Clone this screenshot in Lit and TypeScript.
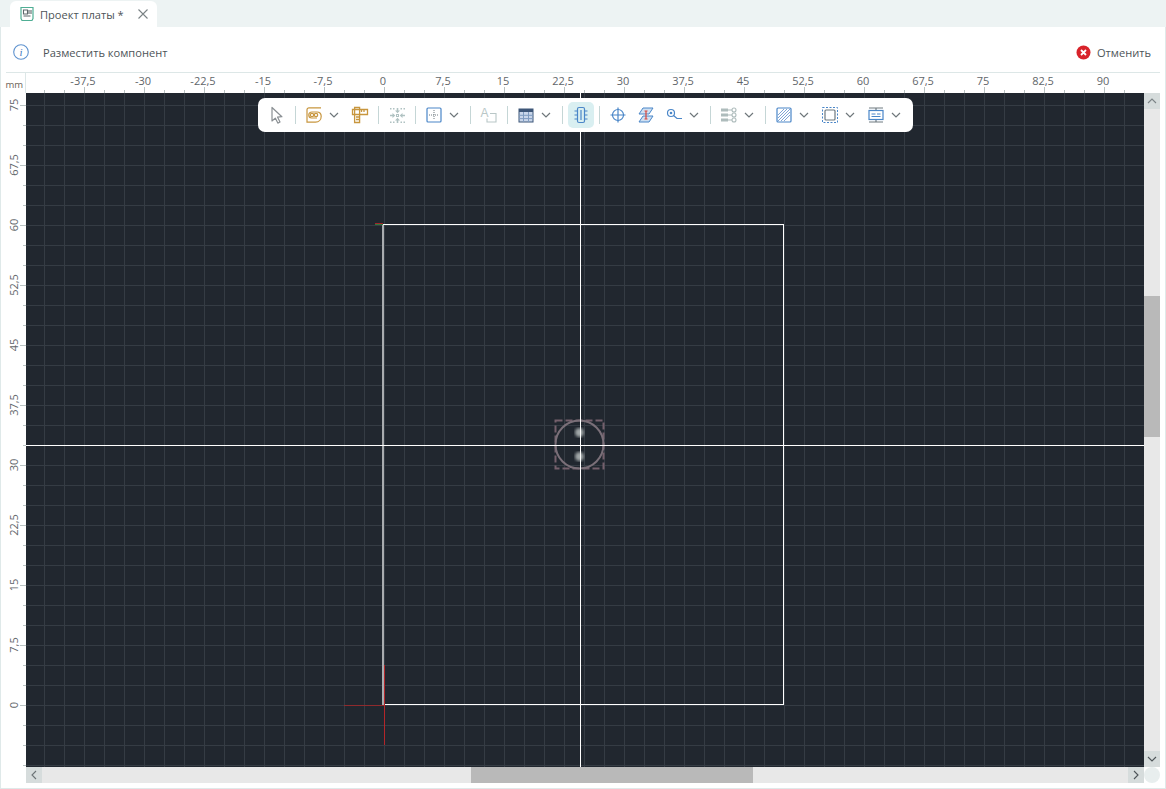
import { LitElement, html, css, svg } from 'lit';
import { customElement } from 'lit/decorators.js';

const X0 = 384;
const Y0 = 705;
const mm = (v: number) => String(v).replace('.', ',');

// grid of the board canvas, one line every 2.5 mm (20px)
const vLines: number[] = [];
for (let x = X0 - 340; x < 1144; x += 20) vLines.push(x);
const hLines: number[] = [];
for (let y = Y0 + 60; y > 93; y -= 20) hLines.push(y);

const xLabels: number[] = [];
for (let v = -37.5; v <= 90; v += 7.5) xLabels.push(v);
const yLabels: number[] = [];
for (let v = 0; v <= 75; v += 7.5) yLabels.push(v);

const ICONS = {
  arrow: svg`<path d="M5 2.5v13.5l3.3-2.9 2.5 5 2.2-1.1-2.5-4.9 4.4-.4z" fill="none" stroke="#8a8f93" stroke-width="1.2" stroke-linejoin="round"/>`,
  route: svg`<g fill="none" stroke="#c8963e" stroke-width="1.200"><path d="M17 2.800H5A2 2 0 0 0 3 4.800V13"/><path d="M3 13v4.200h8.500c3.500 0 5.700-2.700 5.700-6 0-2.700-1.900-4.200-4.200-4.200H8C5.800 7 4.800 8.500 4.800 10S5.800 13 7.500 13H13"/><circle cx="8" cy="10" r="1.700"/><circle cx="12" cy="10" r="1.700"/></g>`,
  ruler: svg`<g fill="none" stroke="#c8963e" stroke-width="1.300"><path d="M4.600 2.500h5v15h-5z"/><path d="M2.500 4.500h15v5h-15z"/><path d="M11.500 4.500v2.500M14 4.500v2.500M6 12h3.500M6 14.500h3.500"/></g>`,
  spread: svg`<g fill="#b0c2c2"><path d="M10.500 8.300L8 5.500h1.700V3h1.600v2.500H13zM10.500 12.700L8 15.500h1.700V18h1.600v-2.500H13zM8.300 10.500L5.500 8v1.700H3v1.600h2.500V13zM12.700 10.500l2.800-2.500v1.700H18v1.600h-2.500V13z"/><path d="M3 3h1.500v1.500H3zM6 3h1.500v1.500H6zM13.500 3H15v1.500h-1.500zM16.500 3H18v1.500h-1.500zM3 16.500h1.500V18H3zM6 16.500h1.500V18H6zM13.500 16.500H15V18h-1.500zM16.500 16.500H18V18h-1.500z"/></g><rect x="9.500" y="9.500" width="2" height="2" fill="none" stroke="#b0c2c2"/>`,
  snap: svg`<rect x="3" y="3" width="14" height="14" rx="1" fill="none" stroke="#4a86c8" stroke-width="1.200"/><path d="M10 5v10M5 10h10" stroke="#6f7a80" stroke-width="1" stroke-dasharray="1 1"/>`,
  text: svg`<text x="1.500" y="11.500" font-family="Liberation Sans, sans-serif" font-size="12" fill="#b9c7c7">A</text><path d="M11 8.500h6v8.500H8v-3.500" fill="none" stroke="#b9c7c7" stroke-width="1.100"/>`,
  table: svg`<rect x="3" y="4" width="14" height="13" fill="#c9d6ea" stroke="#3d5678" stroke-width="1"/><rect x="3" y="4" width="14" height="3" fill="#3d5678"/><path d="M7.500 7v10M12.500 7v10M3 10.300h14M3 13.600h14" stroke="#7f9bc0" stroke-width="1"/>`,
  chip: svg`<g fill="none" stroke="#4a86c8" stroke-width="1.200"><rect x="6.500" y="2.500" width="7" height="15" rx="1.500"/><path d="M3.500 6h3M3.500 10h3M3.500 14h3M13.500 6h3M13.500 10h3M13.500 14h3M10 5v10"/></g>`,
  target: svg`<g fill="none" stroke="#4a86c8" stroke-width="1.200"><circle cx="10" cy="10" r="5.500"/><path d="M10 2.500v15M2.500 10h15"/></g>`,
  via: svg`<g fill="#cfe0f2" stroke="#4a86c8" stroke-width="1"><path d="M7 3h10l-4 6H3z"/><path d="M7 11h10l-4 6H3z"/></g><path d="M10 6v8M8.500 6h3M8.500 14h3" stroke="#d9463c" stroke-width="1.200" fill="none"/>`,
  probe: svg`<g fill="none" stroke="#4a86c8" stroke-width="1.200"><circle cx="7" cy="8" r="3.500"/><path d="M9.500 10.500l3.500 3h5"/></g><circle cx="7" cy="8" r="1.300" fill="#4a86c8"/>`,
  tree: svg`<g fill="#aebcbc"><rect x="2" y="3.500" width="7" height="3"/><rect x="2" y="8.500" width="7" height="3"/><rect x="2" y="13.500" width="7" height="3"/></g><g fill="none" stroke="#aebcbc" stroke-width="1.100"><circle cx="15" cy="5" r="2"/><circle cx="15" cy="10" r="2"/><circle cx="15" cy="15" r="2"/><path d="M9 5h4M9 10h4M9 15h4"/></g>`,
  hatch: svg`<rect x="3" y="3" width="14" height="14" rx="1" fill="#fff" stroke="#4a86c8" stroke-width="1.200"/><path d="M4 10l6-6M4 13l9-9M4 16l12-12M7 16l9-9M10 16l6-6" stroke="#7fa6d6" stroke-width="1"/>`,
  outline: svg`<rect x="2.500" y="2.500" width="15" height="15" fill="none" stroke="#4a86c8" stroke-width="1" stroke-dasharray="2 1.500"/><rect x="5" y="5" width="10" height="10" rx="1" fill="none" stroke="#6f7a80" stroke-width="1.200"/>`,
  frame: svg`<path d="M3 3h14M3 17h14M10 3v2M10 15v2" stroke="#6f7a80" stroke-width="1.200" fill="none"/><rect x="3" y="5.500" width="14" height="9" fill="none" stroke="#4a86c8" stroke-width="1.200"/><path d="M5.500 9h4M5.500 11.500h9M11 9h3.500" stroke="#4a86c8" stroke-width="1"/>`,
};

type IconName = keyof typeof ICONS;

@customElement('app-root')
export class AppRoot extends LitElement {
  static styles = css`
    :host {
      display: flex;
      flex-direction: column;
      height: 789px;
      background: #edf3f3;
      font-family: 'Open Sans', 'Liberation Sans', sans-serif;
      font-size: 11.1px;
      color: #4d5458;
    }

    .tabs {
      height: 27px;
      padding-left: 10px;
      flex: none;
      box-sizing: border-box;
      padding-top: 1px;
    }

    .tab {
      width: 147px;
      height: 26px;
      background: #fff;
      border-radius: 6px 6px 0 0;
      display: flex;
      align-items: center;
      box-sizing: border-box;
      padding-left: 9px;
    }

    .tab-title {
      margin-left: 5px;
      flex: 1;
      white-space: nowrap;
    }

    .tab-close {
      width: 12px;
      height: 12px;
      margin-right: 8px;
    }

    .panel {
      flex: 1;
      display: flex;
      flex-direction: column;
      background: #fff;
      border: 1px solid #dfe9e9;
      border-top: none;
      min-height: 0;
    }

    .actions {
      height: 46px;
      flex: none;
      box-sizing: border-box;
      margin: 0 5px;
      border-bottom: 1px solid #dde7e7;
      display: flex;
      align-items: center;
      padding: 5px 9px 0 7px;
    }

    .hint {
      margin-left: 14px;
      flex: 1;
    }

    .cancel {
      display: flex;
      align-items: center;
      gap: 6px;
    }

    .workspace {
      flex: 1;
      display: grid;
      grid-template-columns: 25px 1118px 16px;
      grid-template-rows: 20px 674px 16px;
      padding: 0 5px 5px 0;
    }

    .corner {
      font-size: 9.5px;
      color: #6b6257;
      display: flex;
      align-items: flex-end;
      justify-content: flex-end;
      padding: 0 2px 2px 0;
      border-right: 1px solid #dde7e7;
      box-sizing: border-box;
    }

    .ruler {
      display: block;
    }

    .ruler text {
      font-family: 'Open Sans', 'Liberation Sans', sans-serif;
      font-size: 11px;
      fill: #5f666a;
    }

    .canvas {
      position: relative;
      background: #21272f;
      overflow: hidden;
    }

    .canvas > svg {
      display: block;
    }

    .toolbar {
      position: absolute;
      left: 232px;
      top: 5px;
      height: 34px;
      width: 655px;
      box-sizing: border-box;
      background: #fff;
      border-radius: 7px;
      display: flex;
      align-items: center;
      padding-left: 6px;
    }

    .tool {
      width: 26px;
      height: 26px;
      flex: none;
      display: flex;
      align-items: center;
      justify-content: center;
      border-radius: 5px;
    }

    .tool.active {
      background: #d9eff1;
    }

    .tool + .tool {
      margin-left: 2px;
    }

    .chev {
      width: 14px;
      flex: none;
      display: flex;
      justify-content: center;
    }

    .chev + .tool {
      margin-left: 6px;
    }

    .sep {
      width: 1px;
      height: 18px;
      flex: none;
      margin: 0 5px;
      background: #c5d6d6;
    }

    .chev + .sep {
      margin-left: 9px;
    }

    .vscroll,
    .hscroll {
      background: #e8e8e8;
      display: flex;
    }

    .vscroll {
      flex-direction: column;
    }

    .sbtn {
      flex: none;
      background: #d6dcdc;
      display: flex;
      align-items: center;
      justify-content: center;
    }

    .vscroll .sbtn {
      height: 16px;
    }

    .hscroll .sbtn {
      width: 16px;
    }

    .vtrack,
    .htrack {
      flex: 1;
    }

    .vthumb {
      margin-top: 187px;
      height: 141px;
      background: #b9b9b9;
    }

    .hthumb {
      margin-left: 429px;
      width: 282px;
      height: 16px;
      background: #b9b9b9;
    }

    .scroll-corner {
      background: #e8eeee;
      border-radius: 50%;
    }
  `;

  private icon(name: IconName) {
    return html`<svg width="20" height="20" viewBox="0 0 20 20">${ICONS[name]}</svg>`;
  }

  private tool(name: IconName, active = false) {
    return html`<div class="tool ${active ? 'active' : ''}">${this.icon(name)}</div>`;
  }

  private chev() {
    return html`<div class="chev">
      <svg width="10" height="6" viewBox="0 0 10 6"><path d="M1 1l4 4 4-4" fill="none" stroke="#6f777b" stroke-width="1.200" /></svg>
    </div>`;
  }

  private toolbar() {
    const sep = html`<div class="sep"></div>`;
    return html`<div class="toolbar">
      ${this.tool('arrow')} ${sep} ${this.tool('route')} ${this.chev()} ${this.tool('ruler')} ${sep}
      ${this.tool('spread')} ${sep} ${this.tool('snap')} ${this.chev()} ${sep} ${this.tool('text')} ${sep}
      ${this.tool('table')} ${this.chev()} ${sep} ${this.tool('chip', true)} ${sep} ${this.tool('target')}
      ${this.tool('via')} ${this.tool('probe')} ${this.chev()} ${sep} ${this.tool('tree')} ${this.chev()} ${sep}
      ${this.tool('hatch')} ${this.chev()} ${this.tool('outline')} ${this.chev()} ${this.tool('frame')} ${this.chev()}
    </div>`;
  }

  private topRuler() {
    return html`<svg class="ruler" width="1118" height="20" viewBox="26 73 1118 20">
      ${vLines.map((x) => svg`<rect x=${x} y="90" width="1" height="3" fill="#b9c2c2" />`)}
      ${xLabels.map((v) => {
        const x = X0 - 1 + v * 8;
        return svg`<rect x=${x + 1} y="87" width="1" height="6" fill="#b9c2c2" /><text x=${x} y="85" text-anchor="middle">${mm(v)}</text>`;
      })}
    </svg>`;
  }

  private leftRuler() {
    return html`<svg class="ruler" width="25" height="674" viewBox="1 93 25 674">
      ${hLines.map((y) => svg`<rect x="23" y=${y} width="3" height="1" fill="#b9c2c2" />`)}
      ${yLabels.map((v) => {
        const y = Y0 - v * 8;
        return svg`<rect x="20" y=${y} width="6" height="1" fill="#b9c2c2" /><text transform="translate(18 ${y}) rotate(-90)" text-anchor="middle">${mm(v)}</text>`;
      })}
    </svg>`;
  }

  private board() {
    return html`<svg width="1118" height="674" viewBox="26 93 1118 674">
      ${vLines.map((x) => svg`<rect x=${x} y="93" width="1" height="674" fill="#353c44" />`)}
      ${hLines.map((y) => svg`<rect x="26" y=${y} width="1118" height="1" fill="#353c44" />`)}

      <!-- board outline -->
      <rect x="382" y="224" width="2" height="481" fill="#a9acaf" />
      <rect x="383" y="224" width="401" height="1" fill="#fff" />
      <rect x="783" y="224" width="1" height="481" fill="#fff" />
      <rect x="384" y="704" width="400" height="1" fill="#fff" />

      <!-- origin markers -->
      <rect x="375" y="223" width="8" height="1" fill="#a3262a" />
      <rect x="375" y="224" width="8" height="1" fill="#2f7a3a" />
      <rect x="384" y="665" width="1" height="80" fill="#b3262a" />
      <rect x="344" y="705" width="40" height="1" fill="#8f2a2d" />

      <!-- component under the cursor -->
      <defs>
        <filter id="soft"><feGaussianBlur stdDeviation="1.500" /></filter>
      </defs>
      <rect x="555.500" y="420.500" width="48" height="48" fill="none" stroke="#75606c" stroke-width="2" stroke-dasharray="7 3" />
      <circle cx="579.500" cy="444.500" r="24" fill="none" stroke="#7a6f78" stroke-width="2" />
      <circle cx="579.500" cy="432.500" r="4.500" fill="#a2a8a9" filter="url(#soft)" />
      <circle cx="579.500" cy="456.500" r="4.500" fill="#a2a8a9" filter="url(#soft)" />

      <!-- crosshair -->
      <rect x="580" y="93" width="1" height="674" fill="#fff" />
      <rect x="26" y="445" width="1118" height="1" fill="#fff" />
    </svg>`;
  }

  render() {
    return html`
      <div class="tabs">
        <div class="tab">
          <svg width="16" height="16" viewBox="0 0 16 16">
            <path d="M2 1.500h12v11l-1 2H3l-1-2z" fill="none" stroke="#4fae94" stroke-width="1.200" />
            <path d="M4.500 4h4v4h-4zM4.500 10h7" fill="none" stroke="#5d676b" stroke-width="1.100" />
            <path d="M10 4v4M12 4v4" stroke="#5d676b" stroke-width="1.100" />
          </svg>
          <span class="tab-title">Проект платы *</span>
          <svg class="tab-close" viewBox="0 0 12 12">
            <path d="M1.500 1.500l9 9M10.500 1.500l-9 9" stroke="#7a8285" stroke-width="1.100" />
          </svg>
        </div>
      </div>
      <div class="panel">
        <div class="actions">
          <svg width="16" height="16" viewBox="0 0 16 16">
            <circle cx="8" cy="8" r="7.300" fill="none" stroke="#5f93cf" stroke-width="1.100" />
            <text x="8" y="12" text-anchor="middle" font-family="Liberation Serif, serif" font-style="italic" font-size="11" fill="#3f78bd">i</text>
          </svg>
          <span class="hint">Разместить компонент</span>
          <div class="cancel">
            <svg width="15" height="15" viewBox="0 0 15 15">
              <circle cx="7.500" cy="7.500" r="7" fill="#d8232a" />
              <path d="M5 5l5 5M10 5l-5 5" stroke="#fff" stroke-width="1.800" />
            </svg>
            <span>Отменить</span>
          </div>
        </div>
        <div class="workspace">
          <div class="corner">mm</div>
          ${this.topRuler()}
          <div></div>
          ${this.leftRuler()}
          <div class="canvas">${this.board()} ${this.toolbar()}</div>
          <div class="vscroll">
            <div class="sbtn">
              <svg width="10" height="6" viewBox="0 0 10 6"><path d="M1 5l4-4 4 4" fill="none" stroke="#7b8386" stroke-width="1.100" /></svg>
            </div>
            <div class="vtrack"><div class="vthumb"></div></div>
            <div class="sbtn">
              <svg width="10" height="6" viewBox="0 0 10 6"><path d="M1 1l4 4 4-4" fill="none" stroke="#4d5458" stroke-width="1.100" /></svg>
            </div>
          </div>
          <div></div>
          <div class="hscroll">
            <div class="sbtn">
              <svg width="6" height="10" viewBox="0 0 6 10"><path d="M5 1L1 5l4 4" fill="none" stroke="#6b7376" stroke-width="1.100" /></svg>
            </div>
            <div class="htrack"><div class="hthumb"></div></div>
            <div class="sbtn">
              <svg width="6" height="10" viewBox="0 0 6 10"><path d="M1 1l4 4-4 4" fill="none" stroke="#4d5458" stroke-width="1.100" /></svg>
            </div>
          </div>
          <div class="scroll-corner"></div>
        </div>
      </div>
    `;
  }
}
